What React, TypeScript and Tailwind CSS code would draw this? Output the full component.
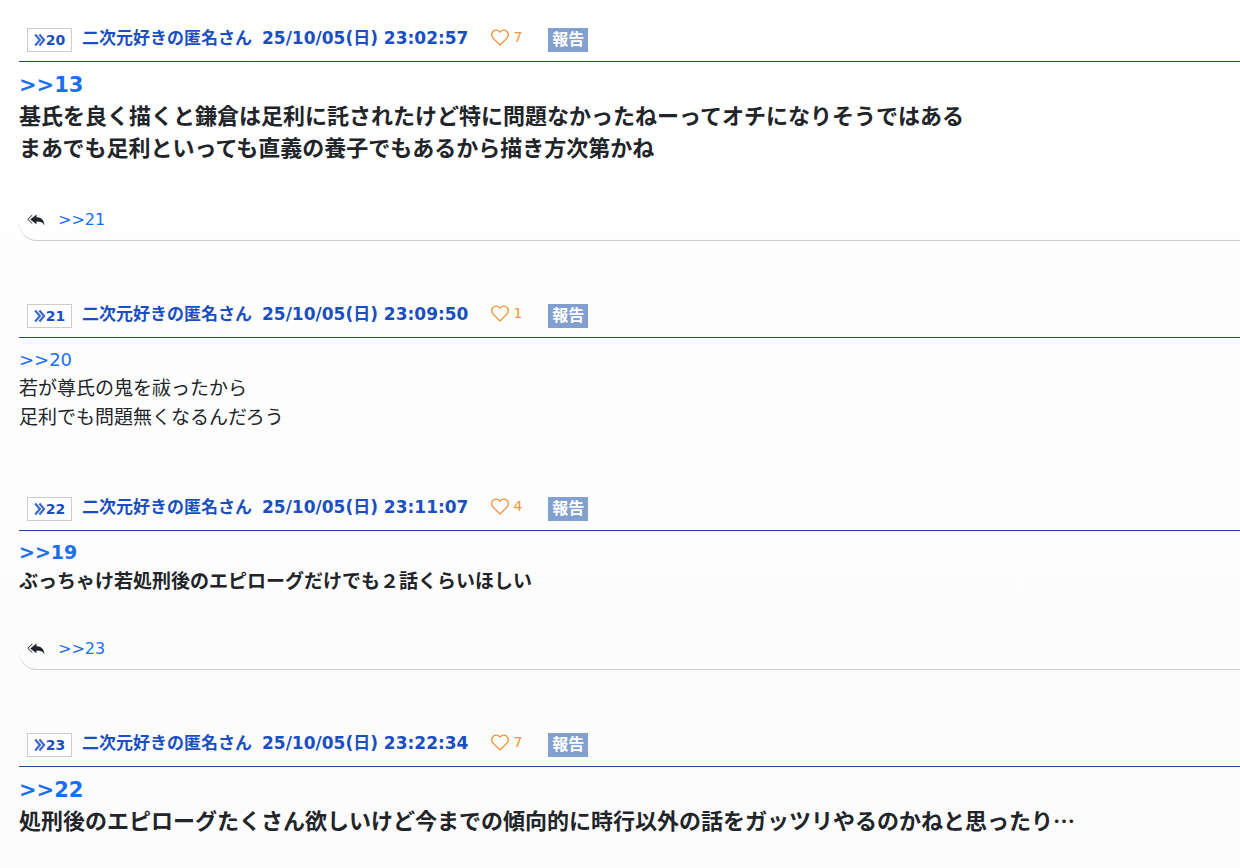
import React from "react";

type Post = {
  id: number;
  time: string;
  likes: number;
  anchor: number;
  lines: string[];
  trailing?: boolean;
  size: "normal" | "strong" | "large";
  reply?: number;
};

const posts: Post[] = [
  {
    id: 20,
    time: "23:02:57",
    likes: 7,
    anchor: 13,
    lines: [
      "基氏を良く描くと鎌倉は足利に託されたけど特に問題なかったねーってオチになりそうではある",
      "まあでも足利といっても直義の養子でもあるから描き方次第かね",
    ],
    size: "large",
    reply: 21,
  },
  {
    id: 21,
    time: "23:09:50",
    likes: 1,
    anchor: 20,
    lines: ["若が尊氏の鬼を祓ったから", "足利でも問題無くなるんだろう"],
    size: "normal",
  },
  {
    id: 22,
    time: "23:11:07",
    likes: 4,
    anchor: 19,
    lines: ["ぶっちゃけ若処刑後のエピローグだけでも２話くらいほしい"],
    size: "strong",
    reply: 23,
  },
  {
    id: 23,
    time: "23:22:34",
    likes: 7,
    anchor: 22,
    lines: ["処刑後のエピローグたくさん欲しいけど今までの傾向的に時行以外の話をガッツリやるのかねと思ったり"],
    trailing: true,
    size: "large",
  },
];

const bodyStyle = {
  normal: "text-[19px] leading-[29px] pb-8",
  strong: "text-[19px] leading-[29px] pb-8 font-bold",
  large: "text-[22px] leading-8 pb-[34px] font-bold",
};

const anchorStyle = {
  normal: "text-[18px]",
  strong: "text-[19px]",
  large: "text-[21px]",
};

function ChevronMark() {
  return (
    <svg width="12" height="14" viewBox="0 0 12 14" fill="none" stroke="currentColor" aria-hidden="true">
      <path d="M1.200 1.500 5.900 7 1.200 12.500M5.400 1.500 10.100 7 5.400 12.500" strokeWidth="2.200" strokeOpacity="0.85" />
    </svg>
  );
}

function Heart() {
  return (
    <svg width="18" height="17" viewBox="0 0 18 17" fill="none" stroke="currentColor" aria-hidden="true">
      <path
        d="M9 16 2.700 9.800C.3 7.300.3 4.300 2.200 2.300 4.200.4 7.200.6 9 3.200 10.800.6 13.800.4 15.800 2.300 17.700 4.300 17.700 7.300 15.300 9.800Z"
        strokeWidth="1.300"
        strokeLinejoin="round"
      />
    </svg>
  );
}

function ReplyMark() {
  return (
    <svg width="18" height="12" viewBox="0 0 18 12" aria-hidden="true">
      <path d="M5.300 1 .8 5.300 5.300 9.600" fill="none" stroke="currentColor" strokeWidth="1" />
      <path d="M9.500 .5V3.200C14 3.200 17 5.500 17.500 11.500 16 8.500 13.500 7.600 9.500 7.600V10.300L3.200 5.400Z" fill="currentColor" />
    </svg>
  );
}

function PostItem({ post }: { post: Post }) {
  return (
    <article id={`res${post.id}`}>
      <header className="flex h-[45px] items-end border-b border-[#1d4b94] pb-[9px] pl-2 font-bold text-[#1a4fc0]">
        <a
          href={`#res${post.id}`}
          className="mr-[10px] flex h-[24px] w-[45px] shrink-0 items-center justify-center border border-[#ccc] bg-white text-[14px]"
        >
          <ChevronMark />
          {post.id}
        </a>
        <div className="flex items-center pb-[2px] leading-6">
          <span className="mr-[10px] text-[17px]">二次元好きの匿名さん</span>
          <time className="mr-[23px] text-[17px]">25/10/05(日) {post.time}</time>
          <button type="button" className="flex items-center gap-1 pb-[2px] text-[14px] leading-5 font-normal text-[#f0953a]" aria-label="いいね">
            <Heart />
            {post.likes}
          </button>
        </div>
        <button type="button" className="ml-[26px] h-[24px] w-10 bg-[#819fcf] text-[16px] leading-5 text-white">
          報告
        </button>
      </header>
      <div className={`pt-[7px] ${bodyStyle[post.size]}`}>
        <a href={`#res${post.anchor}`} className={`block text-[#1a6ff0] ${anchorStyle[post.size]}`}>
          &gt;&gt;{post.anchor}
        </a>
        {post.lines.map((line) => (
          <p key={line} lang="ja">
            {line}
            {post.trailing && <span className="font-['Noto_Sans_CJK_JP',sans-serif] leading-none">…</span>}
          </p>
        ))}
      </div>
      {post.reply && (
        <div className="mb-[30px] flex h-[42px] items-center gap-[13px] rounded-bl-[18px] border-b border-[#ccc] pl-2">
          <ReplyMark />
          <a href={`#res${post.reply}`} className="text-[16px] text-[#1a6ff0]">
            &gt;&gt;{post.reply}
          </a>
        </div>
      )}
    </article>
  );
}

export default function App() {
  return (
    <main className="flex min-h-screen flex-col gap-[22px] bg-linear-to-b from-white to-[#fbfbfb] pt-[17px] pl-[19px] font-['DejaVu_Sans','Noto_Sans_CJK_JP',sans-serif] text-[#212529]">
      {posts.map((post) => (
        <PostItem key={post.id} post={post} />
      ))}
    </main>
  );
}
